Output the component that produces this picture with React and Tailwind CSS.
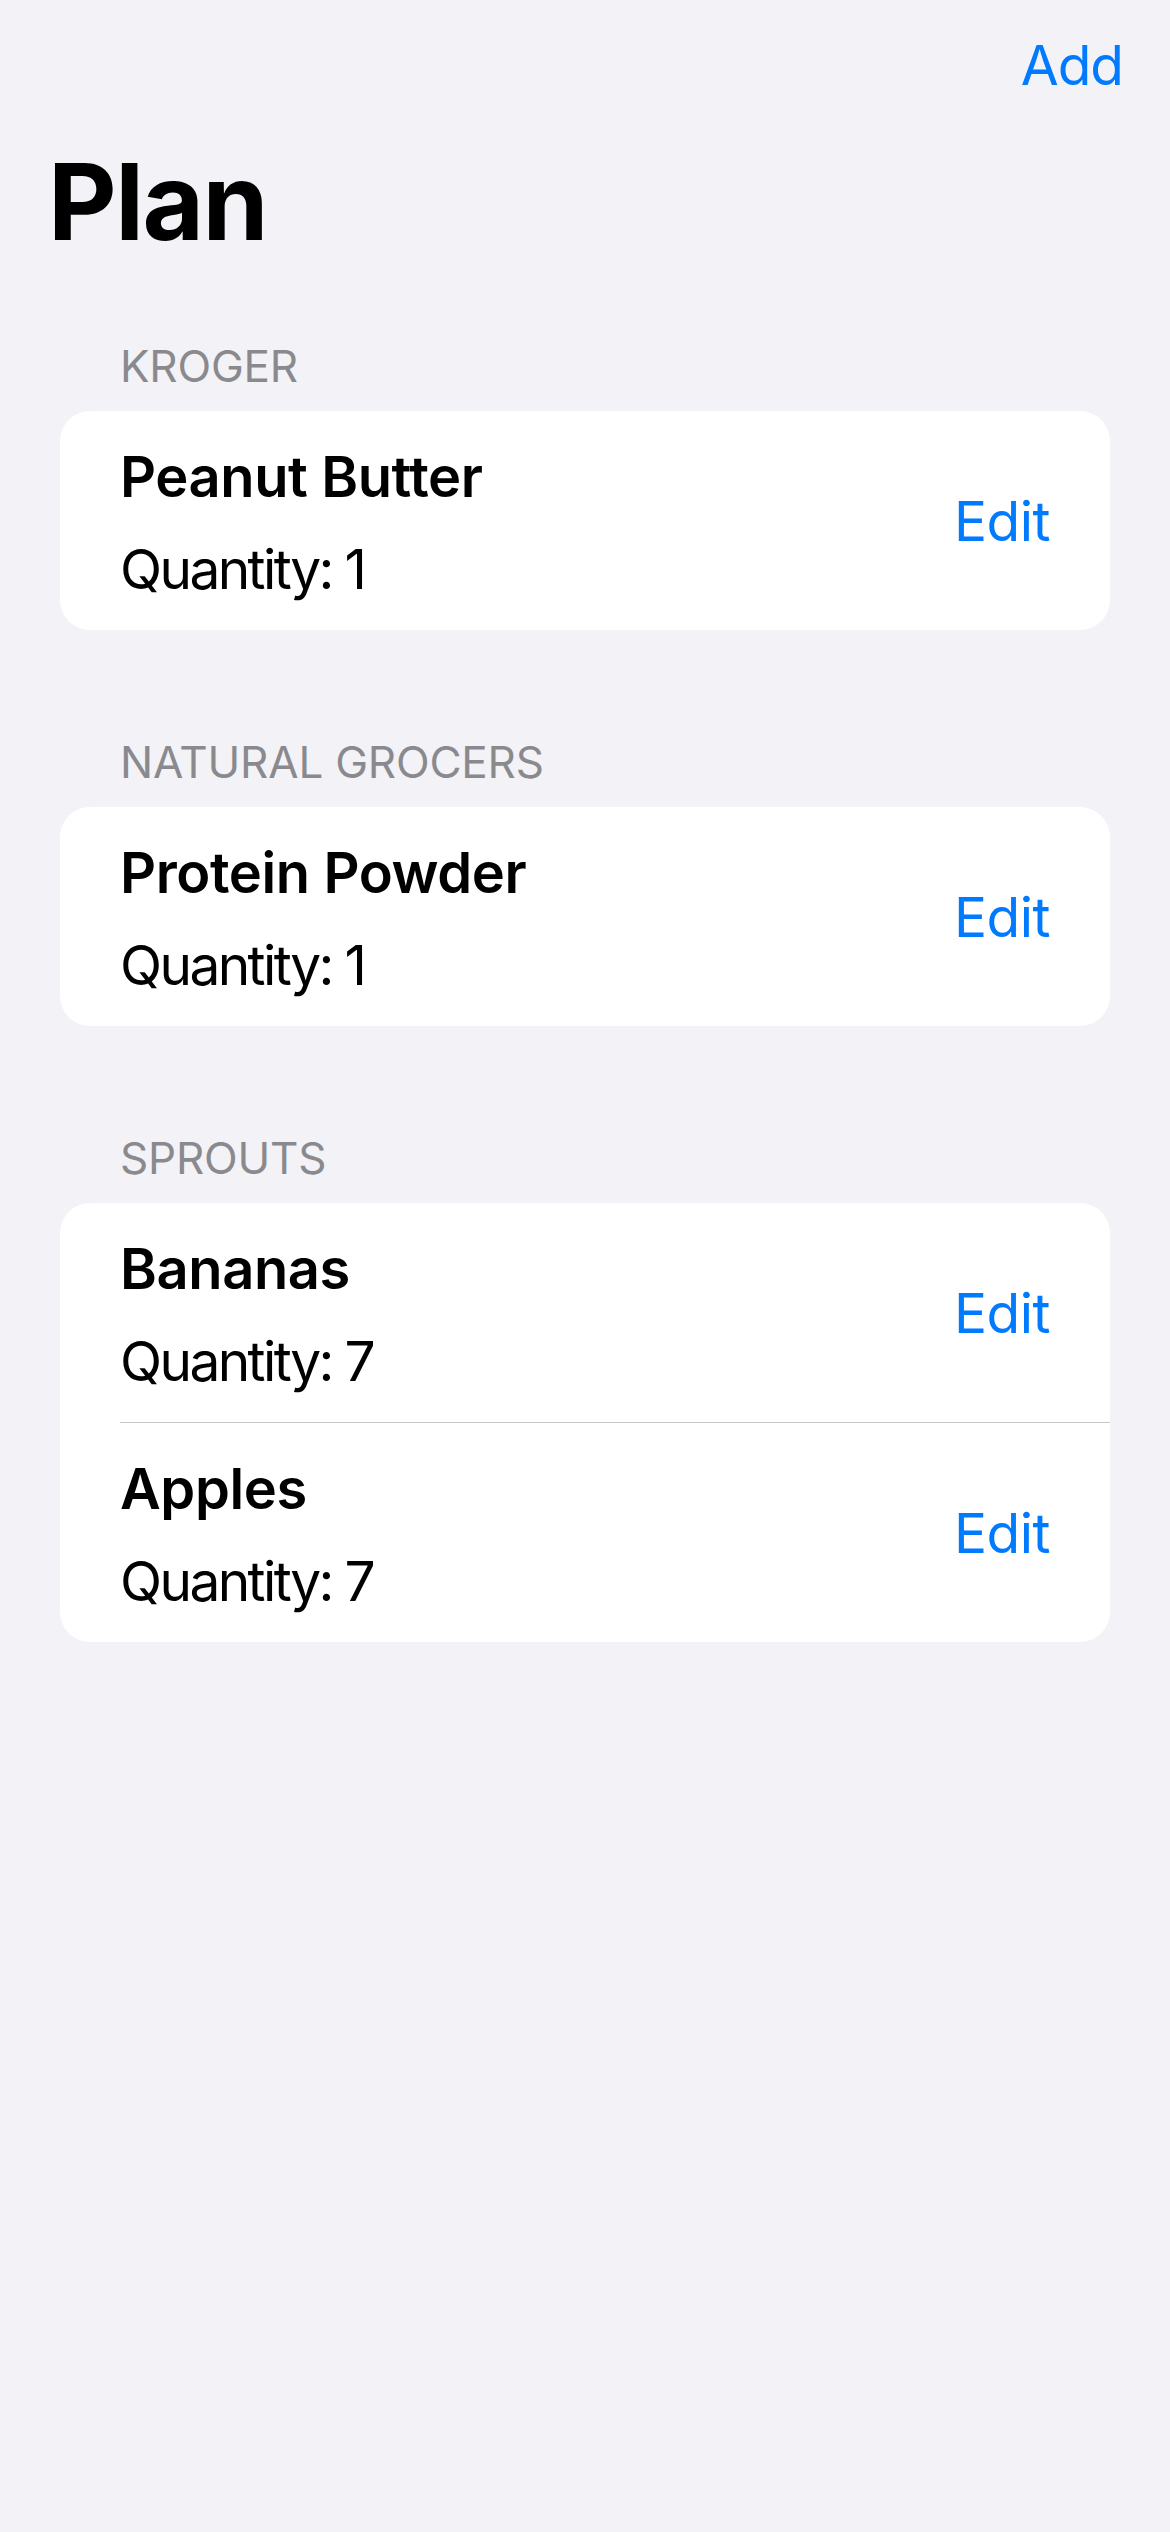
import React from "react";

const sections = [
  { store: "KROGER", items: [{ name: "Peanut Butter", qty: 1 }] },
  { store: "NATURAL GROCERS", items: [{ name: "Protein Powder", qty: 1 }] },
  {
    store: "SPROUTS",
    items: [
      { name: "Bananas", qty: 7 },
      { name: "Apples", qty: 7 },
    ],
  },
];

function ItemRow({ item }) {
  return (
    <div className="flex items-center justify-between px-[60px] py-[28px]">
      <div className="flex flex-col gap-[26px] pt-[5px]">
        <span className="text-[56px] leading-[66px] font-semibold text-black tracking-[-0.4px]">
          {item.name}
        </span>
        <span className="text-[55px] leading-[66px] text-black tracking-[-2.6px]">
          Quantity: {item.qty}
        </span>
      </div>
      <button className="text-[55px] leading-[66px] text-[#007aff] tracking-[-0.5px]">
        Edit
      </button>
    </div>
  );
}

export default function App() {
  return (
    <div
      className="min-h-screen bg-[#f2f2f7] pb-10"
      style={{ fontFamily: "Inter, 'Noto Sans', sans-serif" }}
    >
      <div className="flex justify-end pt-[32px] pr-[47px]">
        <button className="text-[55px] leading-[66px] text-[#007aff] tracking-[-1px]">
          Add
        </button>
      </div>
      <h1 className="mt-[44px] pl-[48px] text-[106px] leading-[120px] font-bold tracking-[-1.5px] text-black">
        Plan
      </h1>
      <div className="mt-[78px] flex flex-col gap-[106px]">
        {sections.map((s) => (
          <section key={s.store} className="mx-[60px]">
            <h2 className="pl-[60px] mb-[19px] text-[44px] leading-[52px] text-[#8a8a8e] tracking-[-0.2px]">
              {s.store}
            </h2>
            <div className="bg-white rounded-[30px] overflow-hidden">
              {s.items.map((item, i) => (
                <div key={item.name}>
                  {i > 0 && <div className="ml-[60px] h-px bg-[#c6c6c8]" />}
                  <ItemRow item={item} />
                </div>
              ))}
            </div>
          </section>
        ))}
      </div>
    </div>
  );
}
